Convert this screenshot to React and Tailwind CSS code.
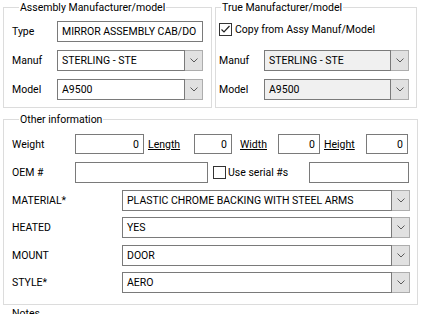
const Chevron = () => (
  <svg width="8" height="5" viewBox="0 0 8 5">
    <path d="M0.5 0.5 L4 4 L7.5 0.5" fill="none" stroke="#5a5a5a" strokeWidth="1" />
  </svg>
)

const Combo = ({ value, width, disabled }) => (
  <div className={`flex h-[21px] shrink-0 ${width}`}>
    <div
      className={`flex-1 flex items-center pl-[4px] border border-[#7a7a7a] overflow-hidden whitespace-nowrap ${
        disabled ? 'bg-[#f0f0f0]' : 'bg-white'
      }`}
    >
      {value}
    </div>
    <div className="w-[18px] flex items-center justify-center bg-[#e1e1e1] border border-l-0 border-[#adadad]">
      <Chevron />
    </div>
  </div>
)

const TextBox = ({ value, width, height = 'h-[21px]', right }) => (
  <div
    className={`flex items-center shrink-0 border border-[#7a7a7a] bg-white overflow-hidden whitespace-nowrap ${height} ${width} ${
      right ? 'justify-end pr-[4px]' : 'pl-[4px]'
    }`}
  >
    {value}
  </div>
)

const CheckBox = ({ checked }) => (
  <div className="w-[13px] h-[13px] shrink-0 border border-[#333333] bg-white flex items-center justify-center">
    {checked && (
      <svg width="11" height="11" viewBox="0 0 11 11">
        <path d="M1.5 5.5 L4 8 L9.5 2" fill="none" stroke="#222222" strokeWidth="1.2" />
      </svg>
    )}
  </div>
)

const Legend = ({ children, offset }) => (
  <legend className={`h-[15px] leading-[15px] px-[1px] ${offset}`}>{children}</legend>
)

const ComboRow = ({ label, value, className }) => (
  <div className={`flex items-center ${className}`}>
    <span className="w-[110px] shrink-0">{label}</span>
    <Combo value={value} width="w-[288px]" />
  </div>
)

export default function App() {
  return (
    <div
      className="w-[441px] h-[314px] overflow-hidden bg-white text-black text-[10.5px] leading-[15px]"
      style={{ fontFamily: 'Roboto, "Liberation Sans", sans-serif' }}
    >
      <div className="flex pl-[3px]">
        {/* Assembly manufacturer */}
        <fieldset className="w-[209px] h-[108px] border border-[#dcdcdc] pl-[8px] pt-[6px]">
          <Legend offset="ml-[7px]">Assembly Manufacturer/model</Legend>
          <div className="flex items-center">
            <span className="w-[45px] shrink-0">Type</span>
            <TextBox value="MIRROR ASSEMBLY CAB/DO" width="w-[146px]" />
          </div>
          <div className="flex items-center mt-[8px]">
            <span className="w-[45px] shrink-0">Manuf</span>
            <Combo value="STERLING - STE" width="w-[146px]" />
          </div>
          <div className="flex items-center mt-[8px]">
            <span className="w-[45px] shrink-0">Model</span>
            <Combo value="A9500" width="w-[146px]" />
          </div>
        </fieldset>

        {/* True manufacturer */}
        <fieldset className="w-[202px] h-[108px] ml-[3px] border border-[#dcdcdc] pl-[3px] pt-[4px]">
          <Legend offset="ml-[2px]">True Manufacturer/model</Legend>
          <div className="flex items-center h-[20px] gap-[3px]">
            <CheckBox checked />
            <span>Copy from Assy Manuf/Model</span>
          </div>
          <div className="flex items-center mt-[11px]">
            <span className="w-[45px] shrink-0">Manuf</span>
            <Combo value="STERLING - STE" width="w-[145px]" disabled />
          </div>
          <div className="flex items-center mt-[8px]">
            <span className="w-[45px] shrink-0">Model</span>
            <Combo value="A9500" width="w-[145px]" disabled />
          </div>
        </fieldset>
      </div>

      {/* Other information */}
      <fieldset className="ml-[3px] mt-[4px] w-[415px] h-[193px] border border-[#dcdcdc] pl-[8px] pt-[7px]">
        <Legend offset="ml-[7px]">Other information</Legend>
        <div className="flex items-center">
          <span className="w-[63px] shrink-0">Weight</span>
          <TextBox value="0" width="w-[69px]" height="h-[20px]" right />
          <span className="w-[46px] shrink-0 ml-[4px] underline">Length</span>
          <TextBox value="0" width="w-[38px]" height="h-[20px]" right />
          <span className="w-[38px] shrink-0 ml-[8px] underline">Width</span>
          <TextBox value="0" width="w-[42px]" height="h-[20px]" right />
          <span className="w-[42px] shrink-0 ml-[4px] underline">Height</span>
          <TextBox value="0" width="w-[42px]" height="h-[20px]" right />
        </div>
        <div className="flex items-center mt-[8px]">
          <span className="w-[63px] shrink-0">OEM #</span>
          <TextBox value="" width="w-[133px]" />
          <div className="w-[96px] shrink-0 ml-[5px] flex items-center gap-[2px]">
            <CheckBox />
            <span>Use serial #s</span>
          </div>
          <TextBox value="" width="w-[100px]" />
        </div>
        <ComboRow label="MATERIAL*" value="PLASTIC CHROME BACKING WITH STEEL ARMS" className="mt-[7px]" />
        <ComboRow label="HEATED" value="YES" className="mt-[6px]" />
        <ComboRow label="MOUNT" value="DOOR" className="mt-[7px]" />
        <ComboRow label="STYLE*" value="AERO" className="mt-[6px]" />
      </fieldset>

      <div className="pl-[12px] mt-[1px]">Notes</div>
    </div>
  )
}
